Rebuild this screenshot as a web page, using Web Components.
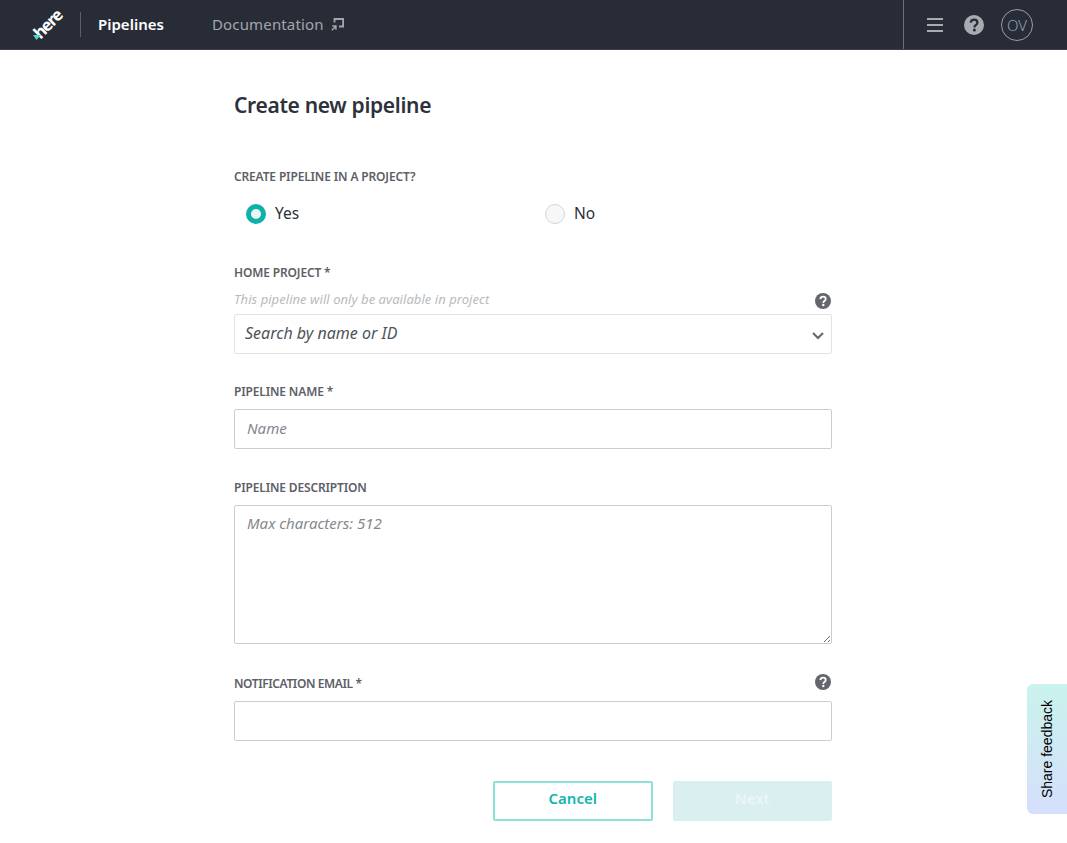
<!DOCTYPE html>
<html lang="en"><head><meta charset="utf-8"><title>Create new pipeline</title>
<style>
html,body{margin:0;padding:0;background:#fff}
body{font-family:"Noto Sans","Open Sans",sans-serif;color:#2c3038;height:843px;overflow:hidden}
</style></head><body>
<app-header></app-header>
<pipeline-page>
  <h-title>Create new pipeline</h-title>
  <form-field gap="17" top="49" label="CREATE PIPELINE IN A PROJECT?">
    <radio-group><radio-option checked>Yes</radio-option><radio-option>No</radio-option></radio-group>
  </form-field>
  <form-field top="39" gap="7" label="HOME PROJECT *" hint="This pipeline will only be available in project" help>
    <text-box kind="select" tone="light">Search by name or ID</text-box>
  </form-field>
  <form-field top="30" gap="9" label="PIPELINE NAME *"><text-box>Name</text-box></form-field>
  <form-field top="31" gap="9" label="PIPELINE DESCRIPTION"><text-box kind="area">Max characters: 512</text-box></form-field>
  <form-field top="32" gap="9" ls="-.4" label="NOTIFICATION EMAIL *" help><text-box></text-box></form-field>
  <action-row><app-button kind="outline">Cancel</app-button><app-button kind="disabled">Next</app-button></action-row>
</pipeline-page>
<feedback-tab>Share feedback</feedback-tab>
<script>
const F='"Noto Sans","Open Sans",sans-serif';
function def(name,html){customElements.define(name,class extends HTMLElement{
  connectedCallback(){if(this.shadowRoot)return;const r=this.attachShadow({mode:'open'});r.innerHTML=typeof html==='function'?html(this):html;}
});}
const helpIcon=(s,bg,fg)=>`<svg style="display:block" width="${s}" height="${s}" viewBox="0 0 20 20" aria-hidden="true"><circle cx="10" cy="10" r="10" fill="${bg}"/><path d="M6.700 7.600c.2-2 1.600-3 3.400-3 1.900 0 3.300 1.100 3.300 2.800 0 1.300-.7 2-1.700 2.700-.9.600-1.200 1-1.200 1.900v.4" fill="none" stroke="${fg}" stroke-width="2.300"/><circle cx="10.400" cy="15" r="1.500" fill="${fg}"/></svg>`;
def('app-header',`<style>
:host{display:flex;align-items:stretch;height:50px;box-sizing:border-box;background:#282c37;border-bottom:1px solid #3c404a;font-family:${F}}
.brand{width:80px;position:relative;flex:none;overflow:hidden}
.logo{position:absolute;left:31px;top:15px;font:700 16.500px/17px ${F};color:#fff;transform:rotate(-45deg);letter-spacing:-1.200px}
.tri{position:absolute;left:33px;top:35px}
.sep{width:1px;height:25px;background:#5c606a;align-self:center;flex:none}
.cur{margin-left:17px;color:#fff;font-size:15px;font-weight:600;align-self:center;width:114px;flex:none;padding-bottom:2px}
.doc{color:#a3a6ac;font-size:15px;align-self:center;display:flex;align-items:center;gap:8px;letter-spacing:.15px;padding-bottom:2px}
.doc svg{margin-left:-1px;margin-top:1px}
.sp{flex:1}
.right{width:164px;border-left:1px solid #6d7079;display:flex;align-items:center;flex:none;box-sizing:border-box;padding-left:23px}
.ham{margin-right:21px;display:block}
.q{margin-right:17px;display:block}
.av{width:30px;height:30px;border:1px solid #9a9da3;border-radius:50%;color:#8fa3b5;font-size:15px;display:flex;align-items:center;justify-content:center;font-weight:300}
</style>
<div class="brand"><span class="logo">here</span><svg class="tri" width="8" height="5" viewBox="0 0 8 5"><path d="M0 0h8L3.500 5z" fill="#48dad0"/></svg></div>
<div class="sep"></div><div class="cur">Pipelines</div>
<div class="doc">Documentation<svg width="13" height="13" viewBox="0 0 13 13" fill="none" stroke="#a3a6ac" stroke-width="1.800"><path d="M3.500 4.500V1h8.600v7.500H8"/><path d="M.8 12.200l4-4M1.200 8h3.700v3.700" stroke-width="1.500"/></svg></div>
<div class="sp"></div>
<div class="right"><svg class="ham" width="16" height="14" viewBox="0 0 16 14" stroke="#a8abb0" stroke-width="2"><path d="M0 1h16M0 7h16M0 13h16"/></svg><span class="q">${helpIcon(20,'#a8abb0','#282c37')}</span><div class="av">OV</div></div>`);
def('pipeline-page',`<style>:host{display:block;width:598px;margin-left:234px}</style><slot></slot>`);
def('h-title',`<style>:host{display:block;font:600 21px/30px ${F};color:#2d323c;padding-top:40px;letter-spacing:-.32px}</style><slot></slot>`);
def('form-field',el=>`<style>
:host{display:block;margin-top:${el.getAttribute('top')||30}px;position:relative;font-family:${F}}
.l{font-size:12px;line-height:16px;font-weight:600;color:#5d6066;display:block;letter-spacing:${el.getAttribute('ls')||'-.15'}px}
.h{font-size:13px;line-height:16px;font-style:italic;color:#b9bbbe;display:block;margin-top:10px;letter-spacing:.05px}
.q{position:absolute;right:1px;display:block;line-height:0}
.c{display:block;margin-top:${el.getAttribute('gap')||9}px}
</style><span class="l">${el.getAttribute('label')}</span>${el.hasAttribute('hint')?`<span class="h">${el.getAttribute('hint')}</span>`:''}${el.hasAttribute('help')?`<span class="q" style="top:${el.hasAttribute('hint')?28:-2}px">${helpIcon(16,'#63666d','#fff')}</span>`:''}<div class="c"><slot></slot></div>`);
def('radio-group',`<style>:host{display:grid;grid-template-columns:299px 299px}</style><slot></slot>`);
def('radio-option',el=>`<style>
:host{display:flex;align-items:center;gap:9px;padding-left:12px;height:24px;font:15.500px/24px ${F};color:#2c3038}
.r{width:20px;height:20px;border-radius:50%;box-sizing:border-box;${el.hasAttribute('checked')?'border:5px solid #0db1a8;background:#e9f6f6':'border:1px solid #d3d5d8;background:#f7f7f8'}}
.t{padding-bottom:2px}
</style><span class="r"></span><span class="t"><slot></slot></span>`);
def('text-box',el=>{const k=el.getAttribute('kind');const light=el.getAttribute('tone')==='light';return `<style>
:host{display:block;position:relative;box-sizing:border-box;height:${k==='area'?139:40}px;border:1px solid ${light?'#e2e3e5':'#cbcdd0'};border-radius:2px;background:#fff;
padding:${k==='area'?'7px':'0'} ${k==='select'?'10px':'12px'};font:italic ${light?16:15}px/${k==='area'?'20px':'36px'} ${F};color:${light?'#50535a':'#85888d'}}
svg{position:absolute}
</style><slot></slot>${k==='select'?`<svg style="right:7px;top:17px" width="12" height="8" viewBox="0 0 12 8" fill="none" stroke="#63666d" stroke-width="2"><path d="M1 1l5 5 5-5"/></svg>`:''}${k==='area'?`<svg style="right:0;bottom:0" width="8" height="8" viewBox="0 0 8 8" stroke="#6e7075" stroke-width="1"><path d="M1 7l6-6M5 7l2-2"/></svg>`:''}`});
def('action-row',`<style>:host{display:flex;justify-content:flex-end;gap:20px;margin-top:40px}</style><slot></slot>`);
def('app-button',el=>{const o=el.getAttribute('kind')==='outline';return `<style>
:host{display:flex;align-items:center;justify-content:center;box-sizing:border-box;width:159.500px;height:40px;border-radius:2px;padding-bottom:5px;font:600 15px/1 ${F};
${o?'border:2px solid #8fe0dc;color:#12b5ad;background:#fff':'background:#daf0f0;color:#e9f7f6'}}
</style><slot></slot>`});
def('feedback-tab',`<style>
:host{position:fixed;right:0;top:684px;width:40px;height:130px;border-radius:6px 0 0 6px;background:linear-gradient(#c9f3ed,#d5dffc);display:flex;align-items:center;justify-content:center;font:14px "Liberation Sans",Arial,sans-serif;color:#000}
span{writing-mode:vertical-rl;transform:rotate(180deg);white-space:nowrap}
</style><span><slot></slot></span>`);
</script>
</body></html>
